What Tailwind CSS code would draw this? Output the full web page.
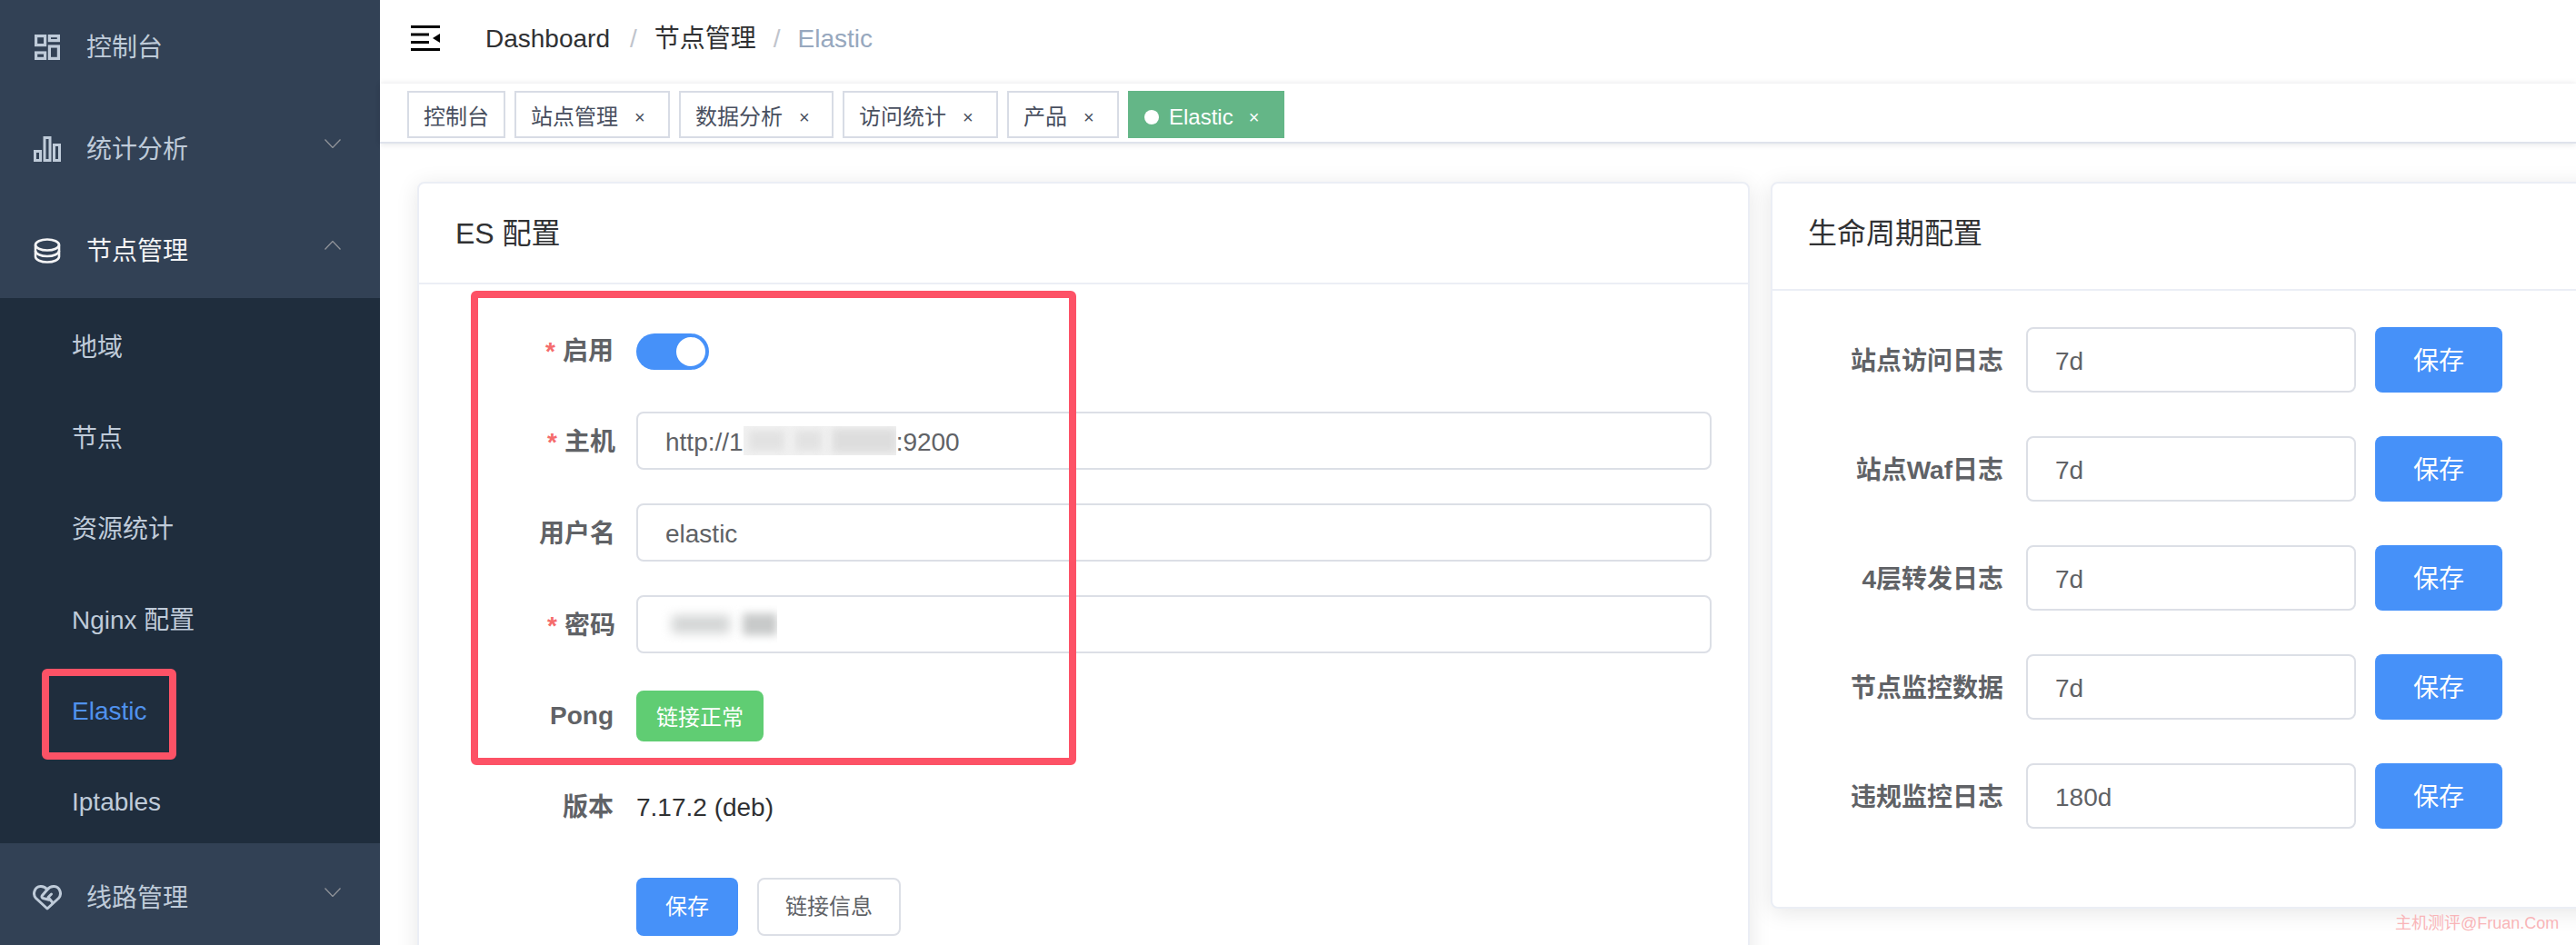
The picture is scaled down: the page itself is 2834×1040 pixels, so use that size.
<!DOCTYPE html>
<html lang="zh-CN">
<head>
  <meta charset="UTF-8" />
  <title>Elastic</title>
  <script src="https://cdn.jsdelivr.net/npm/@tailwindcss/browser@4"></script>
</head>
<body class="bg-white font-['Liberation_Sans','Noto_Sans_CJK_SC',sans-serif]">
  <div class="relative flex h-[1040px] w-[2834px] overflow-hidden">

    <!-- sidebar -->
    <aside class="w-[418px] shrink-0 bg-[#324155] text-[28px] text-[#bfcbd9]">
      <div class="-mt-[8px]">
        <div class="flex h-[112px] items-center pl-[38px] pt-[8px]">
          <svg class="w-[28px] h-[28px] shrink-0" viewBox="0 0 28 28" fill="none" stroke="#bfcbd9" stroke-width="3.2"><rect x="1.6" y="1.6" width="10" height="10"/><rect x="16.4" y="1.6" width="10" height="5"/><rect x="1.6" y="20" width="10" height="6.4"/><rect x="16.4" y="13" width="10" height="13.4"/></svg>
          <span class="ml-[29px] mt-[2px]">控制台</span>
        </div>
        <div class="flex h-[112px] items-center pl-[37px] pr-[43px] pt-[8px]">
          <svg class="w-[30px] h-[28px] shrink-0" viewBox="0 0 30 28" fill="none" stroke="#bfcbd9" stroke-width="3"><rect x="1.5" y="16.5" width="6" height="10"/><rect x="12" y="1.5" width="6" height="25"/><rect x="22.5" y="9.5" width="6" height="17"/></svg>
          <span class="ml-[28px] mt-[2px] flex-1">统计分析</span>
          <svg class="w-[18px] h-[10px] -mt-[12px]" viewBox="0 0 18 10" fill="none" stroke="#909399" stroke-width="1.3"><path d="M0.5 0.5 9 9.5 17.500 0.5"/></svg>
        </div>
        <div class="flex h-[112px] items-center pl-[37px] pr-[43px] pt-[8px] text-[#f4f4f5]">
          <svg class="w-[30px] h-[28px] shrink-0" viewBox="0 0 30 28" fill="none" stroke="#f4f4f5" stroke-width="2.6"><ellipse cx="15" cy="7.500" rx="13" ry="6"/><path d="M2 7.500v6.500c0 3.300 5.800 6 13 6s13-2.700 13-6V7.500"/><path d="M2 14v6.500c0 3.300 5.800 6 13 6s13-2.700 13-6V14"/></svg>
          <span class="ml-[28px] mt-[2px] flex-1">节点管理</span>
          <svg class="w-[18px] h-[10px] -mt-[12px]" viewBox="0 0 18 10" fill="none" stroke="#909399" stroke-width="1.3"><path d="M0.5 9.500 9 0.5 17.500 9.500"/></svg>
        </div>
      </div>
      <div class="bg-[#1f2d3d] pl-[79px]">
        <div class="flex h-[100px] items-center pt-[10px]">地域</div>
        <div class="flex h-[100px] items-center pt-[10px]">节点</div>
        <div class="flex h-[100px] items-center pt-[10px]">资源统计</div>
        <div class="flex h-[100px] items-center pt-[10px]">Nginx 配置</div>
        <div class="flex h-[100px] items-center pt-[10px] text-[#5092ee]">Elastic</div>
        <div class="flex h-[100px] items-center pt-[10px]">Iptables</div>
      </div>
      <div class="flex h-[112px] items-center pl-[36px] pr-[43px] pt-[8px]">
        <svg class="w-[32px] h-[28px] shrink-0" viewBox="0 0 32 28" fill="none" stroke="#bfcbd9" stroke-width="3" stroke-linejoin="round" stroke-linecap="round"><path d="M16 26 3.500 14.500C-0.500 10 2 2 8.500 1.600c3-.2 5.500 1 7.500 3.400 2-2.400 4.500-3.600 7.500-3.400C30 2 32.500 10 28.500 14.500L16 26z"/><path d="M16 5 10.500 11.500c-1 1.200-.5 2.500.8 3l6.500 1.800M22 19.500l-5-6 3.500-3.500"/></svg>
        <span class="ml-[27px] mt-[2px] flex-1">线路管理</span>
        <svg class="w-[18px] h-[10px] -mt-[12px]" viewBox="0 0 18 10" fill="none" stroke="#909399" stroke-width="1.3"><path d="M0.5 0.5 9 9.5 17.500 0.5"/></svg>
      </div>
    </aside>

    <main class="flex min-w-0 flex-1 flex-col">
      <!-- header -->
      <header class="flex h-[92px] shrink-0 items-center pl-[34px] text-[28px] text-[#303133]">
        <svg class="w-[32px] h-[28px] -mt-[8px] shrink-0" viewBox="0 0 32 28" fill="#000"><rect width="32" height="3"/><rect y="8.500" width="20" height="3"/><rect y="17" width="20" height="3"/><rect y="25" width="32" height="3"/><path d="M32 9v10l-8-5z"/></svg>
        <div class="ml-[50px] -mt-[7px] flex items-center">
          <span>Dashboard</span>
          <span class="ml-[22px] mr-[19px] text-[#c0c4cc]">/</span>
          <span>节点管理</span>
          <span class="mx-[19px] text-[#c0c4cc]">/</span>
          <span class="text-[#97a8be]">Elastic</span>
        </div>
      </header>

      <!-- tags -->
      <div class="z-10 flex h-[66px] shrink-0 gap-[10px] border-b-2 border-[#dfe3ec] bg-white pl-[30px] pt-[8px] text-[24px] text-[#495060] shadow-[0_-2px_6px_rgba(0,21,41,0.05),0_2px_6px_rgba(0,21,41,0.08)]">
        <div class="flex h-[52px] w-[108px] items-center border-2 border-[#d8dce5] pl-[16px] pt-[5px]">控制台</div>
        <div class="flex h-[52px] w-[171px] items-center border-2 border-[#d8dce5] pl-[16px] pt-[5px]">站点管理<span class="ml-[18px] text-[20px]">×</span></div>
        <div class="flex h-[52px] w-[170px] items-center border-2 border-[#d8dce5] pl-[16px] pt-[5px]">数据分析<span class="ml-[18px] text-[20px]">×</span></div>
        <div class="flex h-[52px] w-[171px] items-center border-2 border-[#d8dce5] pl-[16px] pt-[5px]">访问统计<span class="ml-[18px] text-[20px]">×</span></div>
        <div class="flex h-[52px] w-[123px] items-center border-2 border-[#d8dce5] pl-[16px] pt-[5px]">产品<span class="ml-[18px] text-[20px]">×</span></div>
        <div class="flex h-[52px] w-[172px] items-center bg-[#64b687] pl-[18px] pt-[5px] text-white">
          <span class="h-[16px] w-[16px] rounded-full bg-white"></span>
          <span class="ml-[11px]">Elastic</span><span class="ml-[17px] text-[20px]">×</span>
        </div>
      </div>

      <!-- content -->
      <div class="flex min-h-0 flex-1 gap-[23px] bg-white pl-[41px] pt-[42px]">
        <!-- ES config -->
        <section class="relative h-[900px] w-[1466px] shrink-0 rounded-[8px] border-2 border-[#ebeef5] bg-white shadow-[0_4px_24px_rgba(0,0,0,0.1)]">
          <div class="flex h-[111px] items-center border-b-2 border-[#ebeef5] pl-[40px] text-[32px] text-[#303133]">ES 配置</div>
          <div class="pl-[239px] pr-[40px] pt-[54px] text-[28px] text-[#606266]">
            <div class="relative flex h-[40px] items-center">
              <label class="absolute right-full mr-[25px] flex whitespace-nowrap font-bold"><span class="mr-[8px] text-[#f56c6c]">*</span>启用</label>
              <div class="flex h-[40px] w-[80px] items-center justify-end rounded-full bg-[#4691f9] pr-[4px]"><span class="h-[32px] w-[32px] rounded-full bg-white"></span></div>
            </div>
            <div class="relative mt-[46px] flex h-[64px] items-center rounded-[8px] border-2 border-[#dcdfe6] pl-[30px] pt-[4px]">
              <label class="absolute right-full mr-[25px] flex whitespace-nowrap font-bold"><span class="mr-[8px] text-[#f56c6c]">*</span>主机</label>
              <span>http://1</span>
              <span class="relative -mt-[4px] flex h-[32px] w-[168px] items-center gap-[12px] overflow-hidden bg-[#f1f1f1]">
                <span class="ml-[6px] h-[22px] w-[40px] bg-[#e2e2e2] blur-[4px]"></span>
                <span class="h-[22px] w-[30px] bg-[#e2e2e2] blur-[4px]"></span>
                <span class="h-[26px] w-[72px] bg-[#dddddd] blur-[4px]"></span>
              </span>
              <span>:9200</span>
            </div>
            <div class="relative mt-[37px] flex h-[64px] items-center rounded-[8px] border-2 border-[#dcdfe6] pl-[30px] pt-[4px]">
              <label class="absolute right-full mr-[25px] flex whitespace-nowrap font-bold">用户名</label>
              <span>elastic</span>
            </div>
            <div class="relative mt-[37px] flex h-[64px] items-center rounded-[8px] border-2 border-[#dcdfe6] pl-[23px] pt-[4px]">
              <label class="absolute right-full mr-[25px] flex whitespace-nowrap font-bold"><span class="mr-[8px] text-[#f56c6c]">*</span>密码</label>
              <span class="-mt-[4px] flex h-[42px] w-[130px] items-center gap-[14px] overflow-hidden">
                <span class="ml-[14px] h-[20px] w-[66px] bg-[#d4d6d6] blur-[6px]"></span>
                <span class="h-[24px] w-[40px] bg-[#c8caca] blur-[5px]"></span>
              </span>
            </div>
            <div class="relative mt-[41px] flex h-[56px] items-center">
              <label class="absolute right-full mr-[25px] flex whitespace-nowrap font-bold">Pong</label>
              <span class="flex h-[56px] w-[140px] items-center justify-center rounded-[8px] bg-[#60cd73] pt-[3px] text-[24px] text-white">链接正常</span>
            </div>
            <div class="relative mt-[53px] flex h-[40px] items-center">
              <label class="absolute right-full mr-[25px] flex whitespace-nowrap font-bold">版本</label>
              <span class="text-[#303133]">7.17.2 (deb)</span>
            </div>
            <div class="mt-[57px] flex gap-[21px] text-[24px]">
              <button class="h-[64px] w-[112px] rounded-[8px] bg-[#4691f9] text-white">保存</button>
              <button class="h-[64px] w-[158px] rounded-[8px] border-2 border-[#dcdfe6] bg-white text-[#606266]">链接信息</button>
            </div>
          </div>
        </section>

        <!-- lifecycle -->
        <section class="h-[800px] w-[1000px] shrink-0 rounded-[8px] border-2 border-[#ebeef5] bg-white shadow-[0_4px_24px_rgba(0,0,0,0.1)]">
          <div class="flex h-[118px] items-center border-b-2 border-[#ebeef5] pl-[39px] pb-[7px] text-[32px] text-[#303133]">生命周期配置</div>
          <div class="flex flex-col gap-[48px] pt-[40px] text-[28px] text-[#606266]">
            <div class="flex h-[72px] items-center">
              <label class="w-[254px] pt-[3px] text-right font-bold">站点访问日志</label>
              <div class="ml-[25px] flex h-[72px] w-[363px] items-center rounded-[8px] border-2 border-[#dcdfe6] pl-[30px] pt-[3px]">7d</div>
              <button class="ml-[21px] h-[72px] w-[140px] rounded-[8px] bg-[#4691f9] pt-[3px] text-white">保存</button>
            </div>
            <div class="flex h-[72px] items-center">
              <label class="w-[254px] pt-[3px] text-right font-bold">站点Waf日志</label>
              <div class="ml-[25px] flex h-[72px] w-[363px] items-center rounded-[8px] border-2 border-[#dcdfe6] pl-[30px] pt-[3px]">7d</div>
              <button class="ml-[21px] h-[72px] w-[140px] rounded-[8px] bg-[#4691f9] pt-[3px] text-white">保存</button>
            </div>
            <div class="flex h-[72px] items-center">
              <label class="w-[254px] pt-[3px] text-right font-bold">4层转发日志</label>
              <div class="ml-[25px] flex h-[72px] w-[363px] items-center rounded-[8px] border-2 border-[#dcdfe6] pl-[30px] pt-[3px]">7d</div>
              <button class="ml-[21px] h-[72px] w-[140px] rounded-[8px] bg-[#4691f9] pt-[3px] text-white">保存</button>
            </div>
            <div class="flex h-[72px] items-center">
              <label class="w-[254px] pt-[3px] text-right font-bold">节点监控数据</label>
              <div class="ml-[25px] flex h-[72px] w-[363px] items-center rounded-[8px] border-2 border-[#dcdfe6] pl-[30px] pt-[3px]">7d</div>
              <button class="ml-[21px] h-[72px] w-[140px] rounded-[8px] bg-[#4691f9] pt-[3px] text-white">保存</button>
            </div>
            <div class="flex h-[72px] items-center">
              <label class="w-[254px] pt-[3px] text-right font-bold">违规监控日志</label>
              <div class="ml-[25px] flex h-[72px] w-[363px] items-center rounded-[8px] border-2 border-[#dcdfe6] pl-[30px] pt-[3px]">180d</div>
              <button class="ml-[21px] h-[72px] w-[140px] rounded-[8px] bg-[#4691f9] pt-[3px] text-white">保存</button>
            </div>
          </div>
        </section>
      </div>
    </main>

    <!-- annotation boxes drawn over the screenshot -->
    <div class="pointer-events-none absolute left-[46px] top-[736px] z-20 h-[100px] w-[148px] rounded-[6px] border-[8px] border-[#fd5266]"></div>
    <div class="pointer-events-none absolute left-[518px] top-[320px] z-20 h-[522px] w-[666px] rounded-[6px] border-[8px] border-[#fd5266]"></div>
    <div class="absolute left-[2635px] top-[1003px] z-20 whitespace-nowrap text-[18px] text-[#f9b5b8]">主机测评@Fruan.Com</div>
  </div>
</body>
</html>
